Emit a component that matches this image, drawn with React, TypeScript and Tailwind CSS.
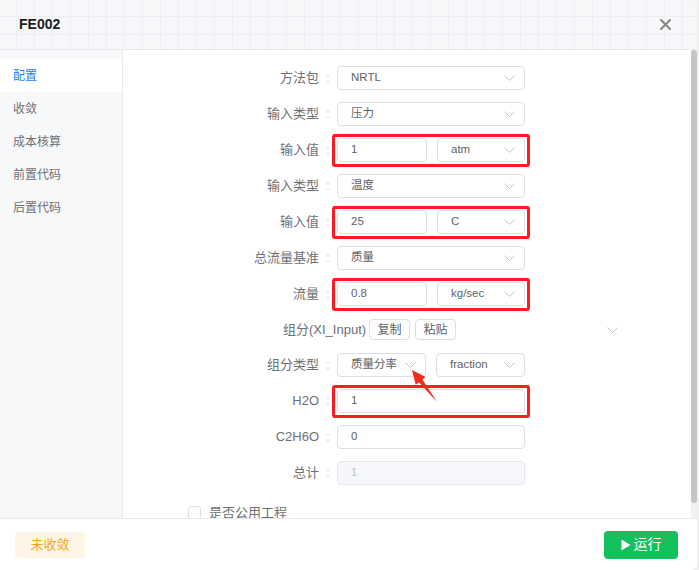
import React from 'react'

const NAV = ['配置', '收敛', '成本核算', '前置代码', '后置代码']

function Chevron() {
  return (
    <svg width="11" height="6" viewBox="0 0 11 6" className="shrink-0">
      <path d="M0.5 0.5L5.5 5.5L10.5 0.5" fill="none" stroke="#c0c4cc" strokeWidth="1" />
    </svg>
  )
}

function Select({ value, className = '' }: { value: string; className?: string }) {
  return (
    <div className={`flex items-center justify-between h-[24px] rounded-[4px] border border-[#dcdfe6] bg-white pl-[13px] pr-[9px] text-[11.5px] text-[#606266] ${className}`}>
      <span>{value}</span>
      <Chevron />
    </div>
  )
}

function Input({ value, className = '', disabled }: { value: string; className?: string; disabled?: boolean }) {
  return (
    <div
      className={`flex items-center h-[24px] rounded-[4px] border pl-[13px] text-[11.5px] ${
        disabled ? 'bg-[#f5f7fa] border-[#e4e7ed] text-[#c0c4cc]' : 'bg-white border-[#dcdfe6] text-[#606266]'
      } ${className}`}
    >
      {value}
    </div>
  )
}

function Row({ label, children, boxed, className = '' }: { label: string; children: React.ReactNode; boxed?: boolean; className?: string }) {
  return (
    <div className={`flex items-center h-[24px] ${className}`}>
      <div className="w-[196px] text-right text-[13px] text-[#6e7075] whitespace-nowrap">{label}</div>
      <div className="w-[18px] text-center text-[12px] text-[#c8cbd1]">:</div>
      <div className="relative w-[188px] flex gap-[10px]">
        {children}
        {boxed && (
          <div className="absolute -left-[5px] -right-[5px] -top-[4px] -bottom-[5px] border-[3px] border-[#ff1c1c] rounded-[3px] pointer-events-none" />
        )}
      </div>
    </div>
  )
}

export default function App() {
  return (
    <div className="w-[699px] h-[570px] bg-[#efefef] font-['Liberation_Sans','Noto_Sans_CJK_SC',sans-serif]">
      <div className="w-[697px] h-[570px] bg-white rounded-r-[6px] overflow-hidden flex flex-col">
        {/* Header */}
        <div className="h-[50px] shrink-0 flex items-center justify-between pl-[19px] pr-[26px] border-b border-[#e6e8eb] bg-[#f6f7f9] bg-[linear-gradient(to_right,#eceef1_1px,transparent_1px),linear-gradient(to_bottom,#eceef1_1px,transparent_1px)] bg-[length:18px_18px] bg-[position:16px_16px]">
          <span className="text-[14px] font-bold text-[#1d1d1f]">FE002</span>
          <svg width="11" height="11" viewBox="0 0 11 11">
            <path d="M1 1L10 10M10 1L1 10" stroke="#858585" strokeWidth="2" strokeLinecap="round" />
          </svg>
        </div>

        {/* Body */}
        <div className="flex-1 flex min-h-0">
          <div className="w-[123px] shrink-0 bg-[#f7f8fa] border-r border-[#e9ebef] pt-[9px]">
            {NAV.map((n, i) => (
              <div
                key={n}
                className={`h-[33px] flex items-center pl-[13px] text-[12px] ${
                  i === 0 ? 'bg-white text-[#1e7fff]' : 'text-[#6e7075]'
                }`}
              >
                {n}
              </div>
            ))}
          </div>

          <div className="flex-1 flex min-w-0">
            <div className="relative flex-1 overflow-hidden pt-[16px] flex flex-col gap-[12px]">
              <Row label="方法包">
                <Select value="NRTL" className="w-full" />
              </Row>
              <Row label="输入类型">
                <Select value="压力" className="w-full" />
              </Row>
              <Row label="输入值" boxed>
                <Input value="1" className="w-[90px]" />
                <Select value="atm" className="w-[88px]" />
              </Row>
              <Row label="输入类型">
                <Select value="温度" className="w-full" />
              </Row>
              <Row label="输入值" boxed>
                <Input value="25" className="w-[90px]" />
                <Select value="C" className="w-[88px]" />
              </Row>
              <Row label="总流量基准">
                <Select value="质量" className="w-full" />
              </Row>
              <Row label="流量" boxed>
                <Input value="0.8" className="w-[90px]" />
                <Select value="kg/sec" className="w-[88px]" />
              </Row>

              <div className="mt-[1px] flex items-center h-[24px] pl-[160px] pr-[73px]">
                <span className="text-[13px] text-[#6e7075] whitespace-nowrap">组分(XI_Input)</span>
                <div className="ml-[3px] h-[21px] w-[41px] flex items-center justify-center rounded-[4px] border border-[#dcdfe6] text-[12px] text-[#606266]">复制</div>
                <div className="ml-[5px] h-[21px] w-[41px] flex items-center justify-center rounded-[4px] border border-[#dcdfe6] text-[12px] text-[#606266]">粘贴</div>
                <div className="flex-1" />
                <Chevron />
              </div>

              <Row label="组分类型" className="mt-[1px]">
                <Select value="质量分率" className="w-[90px]" />
                <Select value="fraction" className="w-[90px]" />
              </Row>
              <Row label="H2O" boxed>
                <Input value="1" className="w-full" />
              </Row>
              <Row label="C2H6O">
                <Input value="0" className="w-full" />
              </Row>
              <Row label="总计">
                <Input value="1" className="w-full" disabled />
              </Row>

              <div className="mt-[6px] h-[24px] flex items-center pl-[65px]">
                <div className="w-[13px] h-[13px] rounded-[3px] border border-[#dcdfe6] bg-white" />
                <span className="ml-[8px] text-[13px] text-[#6e7075]">是否公用工程</span>
              </div>

              {/* annotation arrow */}
              <svg className="absolute left-[280px] top-[312px]" width="45" height="48" viewBox="0 0 45 48">
                <polygon
                  points="9,8 22.5,15 19.4,17.6 34,40 16,20.3 12.7,22.8"
                  fill="#f22a1e"
                />
              </svg>
            </div>

            {/* scrollbar */}
            <div className="w-[6px] shrink-0 bg-[#f1f1f1] flex flex-col">
              <div className="h-[453px] bg-[#c4c4c4] rounded-[3px]" />
            </div>
          </div>
        </div>

        {/* Footer */}
        <div className="h-[52px] shrink-0 border-t border-[#e6e8eb] flex items-center justify-between pl-[15px] pr-[19px]">
          <div className="h-[26px] w-[70px] flex items-center justify-center rounded-[4px] bg-[#fef5e6] text-[13px] text-[#f5a623]">未收敛</div>
          <div className="h-[28px] w-[74px] flex items-center justify-center gap-[3px] rounded-[4px] bg-[#12c15b] text-[14px] text-white">
            <svg width="10" height="12" viewBox="0 0 10 12">
              <path d="M0.5 0.5L9.5 6L0.5 11.5Z" fill="white" />
            </svg>
            <span>运行</span>
          </div>
        </div>
      </div>
    </div>
  )
}
